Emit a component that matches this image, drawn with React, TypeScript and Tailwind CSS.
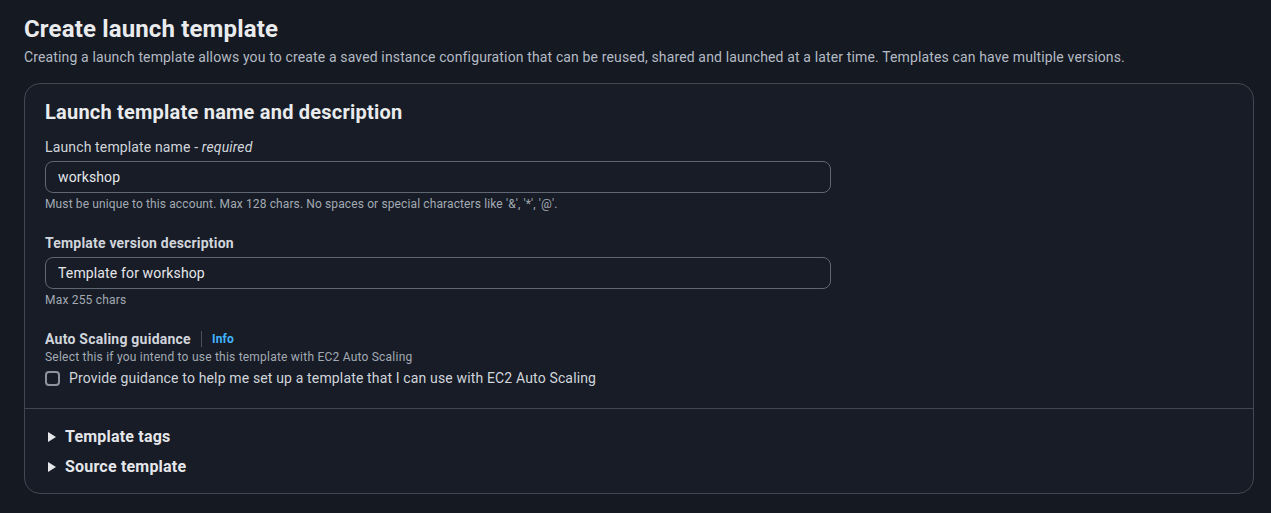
import React from 'react';

const font = { fontFamily: 'Roboto, "Noto Sans", sans-serif' };

const Caret = () => (
  <svg width="8" height="10" viewBox="0 0 8 10" className="shrink-0">
    <path d="M0 0 L8 5 L0 10 Z" fill="#e5e7eb" />
  </svg>
);

export default function App() {
  return (
    <div className="min-h-[513px] w-full bg-[#141922] pl-6 pr-[17px] pt-[14px] pb-5 text-[#d1d5db]" style={font}>
      <h1 className="text-[24px] font-bold leading-[30px] tracking-[0.15px] text-[#e9ebed]">Create launch template</h1>
      <p className="mt-[3px] text-[14px] leading-5 tracking-[0.14px] text-[#b4bbc4]">
        Creating a launch template allows you to create a saved instance configuration that can be reused, shared and launched at a later time. Templates can have multiple versions.
      </p>

      <div className="mt-[16px] rounded-2xl border border-[#424852] bg-[#171c26]">
        <div className="px-5 pt-[14px] pb-[20px]">
          <h2 className="text-[20px] font-bold leading-7 tracking-[0.22px] text-[#e9ebed]">Launch template name and description</h2>

          <div className="mt-[11px]">
            <label className="block text-[14px] leading-5 tracking-[0.14px] text-[#d1d5db]">
              Launch template name - <i>required</i>
            </label>
            <div className="mt-[4px] flex h-8 w-[786px] items-center rounded-lg border border-[#5f6773] px-3 text-[14px] tracking-[0.14px] text-[#e5e7eb]">
              workshop
            </div>
            <p className="mt-[3px] text-[12px] leading-4 tracking-[0.12px] text-[#a3aab3]">
              Must be unique to this account. Max 128 chars. No spaces or special characters like '&amp;', '*', '@'.
            </p>
          </div>

          <div className="mt-[21px]">
            <label className="block text-[14px] font-bold leading-5 tracking-[0.2px] text-[#d1d5db]">Template version description</label>
            <div className="mt-[4px] flex h-8 w-[786px] items-center rounded-lg border border-[#5f6773] px-3 text-[14px] tracking-[0.14px] text-[#e5e7eb]">
              Template for workshop
            </div>
            <p className="mt-[3px] text-[12px] leading-4 tracking-[0.2px] text-[#a3aab3]">Max 255 chars</p>
          </div>

          <div className="mt-[21px]">
            <div className="flex items-center text-[14px] leading-5">
              <span className="font-bold tracking-[0.24px] text-[#d1d5db]">Auto Scaling guidance</span>
              <span className="mx-[10px] h-[16px] w-px bg-[#4b525c]" />
              <span className="text-[12px] font-bold tracking-[0.2px] text-[#42b4ff]">Info</span>
            </div>
            <p className="text-[12px] leading-4 tracking-[0.22px] text-[#a3aab3]">Select this if you intend to use this template with EC2 Auto Scaling</p>
            <label className="mt-[3px] flex items-center gap-[9px] text-[14px] leading-5 tracking-[0.15px] text-[#d1d5db]">
              <span className="h-[15px] w-[15px] rounded-[4px] border-2 border-[#8d949e]" />
              Provide guidance to help me set up a template that I can use with EC2 Auto Scaling
            </label>
          </div>
        </div>

        <div className="border-t border-[#424852] px-5 pt-[17px] pb-[15px]">
          <div className="flex items-center gap-[9px] pl-[3px] text-[16px] font-bold leading-[22px] tracking-[0.2px] text-[#e5e7eb]">
            <Caret />
            Template tags
          </div>
          <div className="mt-2 flex items-center gap-[9px] pl-[3px] text-[16px] font-bold leading-[22px] tracking-[0.2px] text-[#e5e7eb]">
            <Caret />
            Source template
          </div>
        </div>
      </div>
    </div>
  );
}
